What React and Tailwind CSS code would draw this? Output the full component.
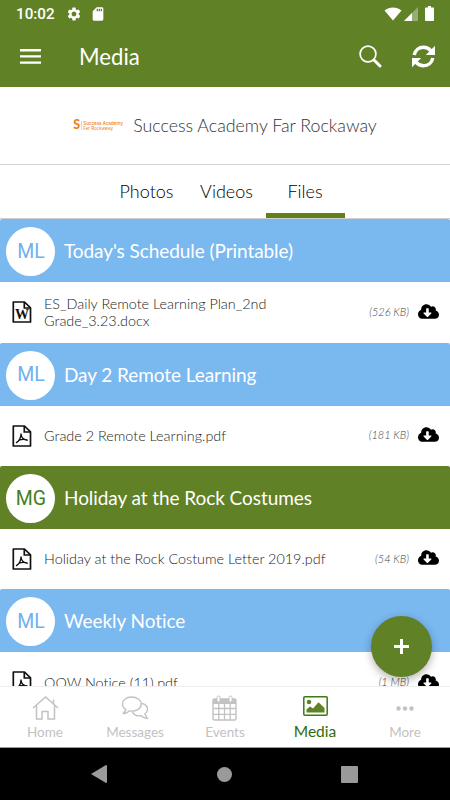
import { FaCloudDownloadAlt } from 'react-icons/fa';
import { MdSettings, MdSdCard } from 'react-icons/md';

const groups = [
  {
    initials: 'ML',
    title: "Today's Schedule (Printable)",
    file: 'ES_Daily Remote Learning Plan_2nd Grade_3.23.docx',
    type: 'word',
    size: '526 KB',
  },
  { initials: 'ML', title: 'Day 2 Remote Learning', file: 'Grade 2 Remote Learning.pdf', type: 'pdf', size: '181 KB' },
  {
    initials: 'MG',
    title: 'Holiday at the Rock Costumes',
    file: 'Holiday at the Rock Costume Letter 2019.pdf',
    type: 'pdf',
    size: '54 KB',
    green: true,
  },
  { initials: 'ML', title: 'Weekly Notice', file: 'OOW Notice (11).pdf', type: 'pdf', size: '1 MB' },
];

function FileIcon({ type }) {
  return (
    <svg width="20" height="22" viewBox="0 0 20 22" fill="none" stroke="#111" strokeWidth="1.7" className="shrink-0">
      <path d="M1.3 1h11.2l6 5.8V21H1.3z" strokeLinejoin="round" />
      <path d="M12.3 1v6h6.2" />
      {type === 'word' ? (
        <text x="9.9" y="18.3" textAnchor="middle" fontFamily="Liberation Serif, serif" fontWeight="bold" fontSize="14" fill="#111" stroke="none">
          W
        </text>
      ) : (
        <path d="M4 17.800c2.500-1.300 5-4.800 5-9.300 0 3.800 2.300 6.300 6.800 6.800M6.300 15.400c2.800-1.200 5.700-1.500 9-.6" strokeWidth="1.300" />
      )}
    </svg>
  );
}

function StatusBar() {
  return (
    <div className="flex h-[27px] items-center bg-[#618126] pl-4 pr-4 text-white">
      <span className="w-[50px] pt-[2px] font-[Roboto,sans-serif] text-[15.2px] font-medium leading-none">10:02</span>
      <MdSettings size={16} />
      <MdSdCard size={16} className="ml-[8px]" />
      <div className="ml-auto flex items-center">
        <svg width="18" height="14" viewBox="0 0 18 14" fill="#fff">
          <path d="M.5 3.500C5.500-.4 12.500-.4 17.500 3.500L9 13.500z" />
        </svg>
        <svg width="14" height="14" viewBox="0 0 14 14" fill="#fff" className="ml-[2px]">
          <path d="M0 14L14 0v14z" opacity=".35" />
          <path d="M0 14l8-8v8z" />
        </svg>
        <svg width="9" height="15" viewBox="0 0 9 15" fill="#fff" className="ml-[7px]">
          <path d="M3 0h3v1.500h2.200c.5 0 .8.3.8.8v11.900c0 .5-.3.8-.8.8H.8c-.5 0-.8-.3-.8-.8V2.300c0-.5.3-.8.8-.8H3z" />
        </svg>
      </div>
    </div>
  );
}

function Header() {
  return (
    <header className="flex h-[60px] items-center bg-[#618126] pb-px pl-5 pr-[15px] text-white">
      <svg width="21" height="15" viewBox="0 0 21 15" fill="#fff">
        <path d="M0 0h21v2.400H0zM0 6.200h21v2.400H0zM0 12.400h21v2.400H0z" />
      </svg>
      <h1 className="ml-[38px] pt-px text-[22.200px] leading-none">Media</h1>
      <svg width="23" height="23" viewBox="0 0 23 23" fill="none" stroke="#fff" className="ml-auto" strokeLinecap="round">
        <circle cx="9" cy="9" r="7.900" strokeWidth="1.700" />
        <path d="M15 15l6 6" strokeWidth="3" />
      </svg>
      {/* two circling arrows */}
      <svg width="23" height="23" viewBox="0 0 23 23" fill="none" className="ml-[30px]">
        <path d="M2.200 10C3.200 5 7 2.300 11.500 2.300c3.300 0 5.500 1.300 7.300 3.400M20.800 13c-1 5-4.800 7.700-9.300 7.700-3.300 0-5.500-1.300-7.300-3.400" stroke="#fff" strokeWidth="3.500" />
        <path d="M23 .8V10h-9.200zM0 22.200V13h9.200z" fill="#fff" />
      </svg>
    </header>
  );
}

function School() {
  return (
    <div className="flex h-[78px] items-center justify-center border-b border-[#d5d5d5]">
      <div className="flex h-[10px] w-[50px] items-center text-[#f08020]">
        <span className="w-[7px] text-[12.500px] font-black leading-none">S</span>
        <span className="ml-[1px] h-[9px] w-px bg-[#f8cda9]" />
        <span className="ml-[1px] whitespace-nowrap font-[Inter,sans-serif] text-[4.500px] leading-[5px]">
          <b className="font-medium">Success Academy</b>
          <br />
          Far Rockaway
        </span>
      </div>
      <span className="ml-[10px] text-[17.800px] font-light leading-none text-[#33333d]">Success Academy Far Rockaway</span>
    </div>
  );
}

function Tabs() {
  return (
    <div className="flex h-[54px] justify-center border-b border-[#cfcfcf] text-[18px] font-light text-black">
      <div className="flex w-[80px] items-center justify-center pl-[2px]">Photos</div>
      <div className="flex w-[80px] items-center justify-center pl-[2px]">Videos</div>
      <div className="flex w-[79px] items-center justify-center border-b-[5px] border-[#618117] pt-[5px]">Files</div>
    </div>
  );
}

function Group({ group }) {
  return (
    <section className="h-[123.300px] shrink-0">
      <div className={`flex h-[63px] items-center rounded-t-[2px] pl-[6.400px] pt-[2px] text-white ${group.green ? 'bg-[#618126]' : 'bg-[#7ab8f0]'}`}>
        <div
          className={`flex size-[49px] items-center justify-center rounded-full bg-white font-[Roboto,sans-serif] text-[19.500px] ${
            group.green ? 'text-[#43801c]' : 'text-[#6fb1ee]'
          }`}
        >
          {group.initials}
        </div>
        <h2 className="ml-[8.600px] pb-[2px] text-[19px] leading-none tracking-[-0.07px]">{group.title}</h2>
      </div>
      <div className="flex h-[60px] items-center pl-3 pr-[11px]">
        <FileIcon type={group.type} />
        <p className="ml-3 w-[290px] text-[14.400px] font-light leading-[17px] text-[#1c1c1c]">{group.file}</p>
        <span className="ml-auto text-[11px] font-light italic text-[#444]">({group.size})</span>
        <FaCloudDownloadAlt size={21} className="mb-[2px] ml-[9px] text-black" />
      </div>
    </section>
  );
}

function HomeIcon() {
  return (
    <svg width="27" height="26" viewBox="0 0 27 26" fill="none" stroke="currentColor" strokeWidth="1.500">
      <path d="M1 13L13.500 2 26 13M4.500 10.500V24H10v-7.500h6V24h6.500V10.500M21.500 9V4.500" />
    </svg>
  );
}

function ChatIcon() {
  return (
    <svg width="28" height="26" viewBox="0 0 28 26" fill="none" stroke="currentColor" strokeWidth="1.400" strokeLinejoin="round">
      <path d="M10.500 2C5.500 2 1.500 5 1.500 9c0 2.500 1.300 4.400 3.500 5.700L2.200 18.500c2.600 0 4.500-1 6-2.500 7 .9 12-2.300 12-7 0-4-4.200-7-9.700-7z" />
      <path d="M20.300 8.200c3.800.8 6.200 3.100 6.200 6 0 2-1 3.600-2.700 4.800l2.700 4.500c-2.700-.1-4.800-1.100-6.200-2.700-4.300.5-7.700-1.200-9-4.200" />
    </svg>
  );
}

function CalendarIcon() {
  return (
    <svg width="25" height="26" viewBox="0 0 25 26" fill="none" stroke="currentColor" className="mr-px">
      <rect x="1" y="4" width="23" height="21" rx="1.500" strokeWidth="1.400" />
      <path d="M1 4h23v5H1z" fill="currentColor" stroke="none" />
      <path d="M1 13.500h23M1 19.300h23M6.800 9v16M12.500 9v16M18.200 9v16" strokeWidth="1.300" />
      <rect x="5" y="1" width="3" height="6" rx="1.500" fill="#fff" />
      <rect x="17" y="1" width="3" height="6" rx="1.500" fill="#fff" />
    </svg>
  );
}

function PictureIcon() {
  return (
    <svg width="25" height="20" viewBox="0 0 25 20" fill="#618126">
      <rect x=".8" y=".8" width="23.400" height="18.400" rx="1" fill="none" stroke="#3f7816" strokeWidth="1.500" />
      <circle cx="6" cy="6" r="2.300" />
      <path d="M3.500 16.500v-3L7 10.500l3 2 5.500-6.300 6 5.800v4.500z" />
    </svg>
  );
}

function DotsIcon() {
  return (
    <svg width="18" height="5" viewBox="0 0 18 5" fill="currentColor">
      <circle cx="2.500" cy="2.500" r="2.200" />
      <circle cx="9" cy="2.500" r="2.200" />
      <circle cx="15.500" cy="2.500" r="2.200" />
    </svg>
  );
}

const navItems = [
  { label: 'Home', Icon: HomeIcon },
  { label: 'Messages', Icon: ChatIcon },
  { label: 'Events', Icon: CalendarIcon },
  { label: 'Media', Icon: PictureIcon, active: true },
  { label: 'More', Icon: DotsIcon },
];

export default function App() {
  return (
    <div className="flex h-[800px] w-[450px] flex-col overflow-hidden bg-white font-[Lato,sans-serif] [font-variant-ligatures:none]">
      <StatusBar />
      <Header />
      <School />
      <Tabs />

      {/* File groups */}
      <main className="relative min-h-0 flex-1">
        <div className="flex h-full flex-col overflow-hidden pt-[0.300px]">
          {groups.map((group) => (
            <Group key={group.title} group={group} />
          ))}
        </div>
        <button className="absolute bottom-[9px] right-[18px] flex size-[61px] items-center justify-center rounded-full bg-[#618126] shadow-[0_3px_8px_rgba(0,0,0,0.3)]">
          <svg width="15" height="15" viewBox="0 0 15 15" stroke="#fff" strokeWidth="3">
            <path d="M7.500 0v15M0 7.500h15" />
          </svg>
        </button>
      </main>

      {/* Bottom navigation */}
      <nav className="grid h-[62px] shrink-0 grid-cols-5 border-b border-t border-b-[#999] border-t-[#eee] bg-white">
        {navItems.map(({ label, Icon, active }) => (
          <div key={label} className={`flex flex-col items-center ${active ? 'text-[#2f6b08]' : 'text-[#c2c2c2]'}`}>
            <div className={`flex items-center justify-center ${active ? 'h-[38px]' : 'h-[42px]'}`}>
              <Icon />
            </div>
            <span className={active ? 'mt-[-2px] text-[15.500px] leading-[16px]' : 'mt-[-5px] text-[13.500px] leading-[16px]'}>{label}</span>
          </div>
        ))}
      </nav>
      <div className="flex h-[52px] shrink-0 items-center justify-between bg-black pl-[91px] pr-[92px]">
        <svg width="16" height="18" viewBox="0 0 16 18" fill="#9a9a9a">
          <path d="M0 9L15 0q1 0 1 1v16q0 1-1 1z" />
        </svg>
        <span className="size-[15px] rounded-full bg-[#9a9a9a]" />
        <span className="size-[17px] rounded-[1px] bg-[#9a9a9a]" />
      </div>
    </div>
  );
}
